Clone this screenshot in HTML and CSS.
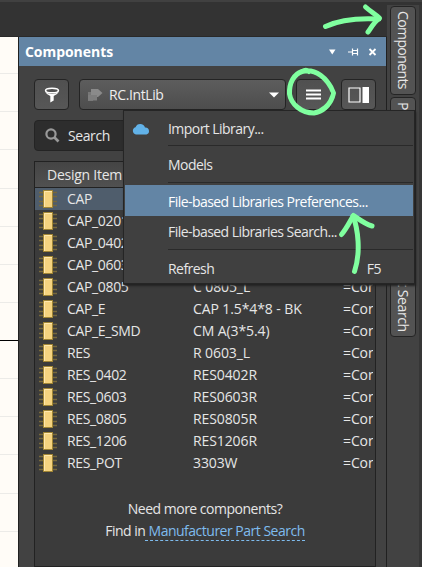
FILE: index.html
```
<!DOCTYPE html>
<html lang="en">
<head>
<meta charset="utf-8">
<title>Components</title>
<link rel="stylesheet" href="styles.css">
</head>
<body>
<svg class="defs" width="0" height="0" aria-hidden="true">
  <symbol id="chip" viewBox="0 0 18 18">
    <path d="M0 2.500h18M0 6.500h18M0 11.500h18M0 15.500h18" stroke="#77683b" stroke-width="1.600"/>
    <rect x="4.500" y=".5" width="9" height="17" fill="#f5d37f" stroke="#a08535"/>
    <path d="M5.500 17V1.500H13" fill="none" stroke="#ffe7ad"/>
  </symbol>
</svg>
<div class="app">
  <div class="topbar"></div>
  <div class="canvas">
    <svg width="18" height="530" shape-rendering="crispEdges">
      <path d="M0 36.500h18M0 74.500h18M0 112.500h18M0 151.500h18M0 189.500h18M0 227.500h18M0 265.500h18M0 341.500h18M0 379.500h18M0 417.500h18M0 456.500h18M0 494.500h18" stroke="#ecebe8"/>
      <path d="M0 303.500h18" stroke="#000"/>
    </svg>
  </div>
  <main class="panel">
    <header class="titlebar">
      <h1>Components</h1>
      <svg width="50" height="12" viewBox="0 0 50 12">
        <path d="M1 3.500h6.500L4.250 8.500z" fill="#fff"/>
        <path d="M20 6h4M24.500 2.500v7M24.500 4.500h5v3h-5M29.500 2.500v7" fill="none" stroke="#fff" stroke-width="1.200"/>
        <path d="M41.500 3l6 6M47.500 3l-6 6" stroke="#fff" stroke-width="1.800"/>
      </svg>
    </header>
    <div class="toolbar">
      <button class="btn"><svg width="16" height="16" viewBox="0 0 16 16"><ellipse cx="8" cy="3.500" rx="6.400" ry="2.300" fill="none" stroke="#fff" stroke-width="1.600"/><path d="M1 4.500Q2 7 6.300 9v6.500l3.400-2V9Q14 7 15 4.500Q12 7 8 7T1 4.500" fill="#fff"/></svg></button>
      <button class="btn combo">
        <svg width="16" height="14" viewBox="0 0 16 14"><path d="M1 4h5v9H1z" fill="#777"/><path d="M4 1h7l4.500 4-4.500 4H4z" fill="#8a8a8a"/><path d="M1 7h9v5.500H1z" fill="#7d7d7d"/></svg>
        <span>RC.IntLib</span>
        <svg class="caret" width="10" height="6"><path d="M0 .5h10L5 5.500z" fill="#fff"/></svg>
      </button>
      <button class="btn menu-btn"><svg width="15" height="11"><path d="M0 1.500h15M0 5.500h15M0 9.500h15" stroke="#fff" stroke-width="2"/></svg></button>
      <button class="btn"><svg width="21" height="16"><path d="M1 1h11v14H1z" fill="none" stroke="#fff" stroke-width="1.200"/><path d="M14.500 0h6.500v16h-6.500z" fill="#fff"/></svg></button>
    </div>
    <div class="search">
      <svg width="15" height="15" viewBox="0 0 15 15"><circle cx="6" cy="6" r="4.600" fill="none" stroke="#999" stroke-width="2.200"/><path d="M9.500 9.500l4 4" stroke="#999" stroke-width="2.600"/></svg>
      <span>Search</span>
    </div>
    <section class="list">
      <div class="list-head">Design Item</div>
      <div class="row selected"><svg><use href="#chip"/></svg><span class="name">CAP</span><span></span><span>=Cor</span></div>
      <div class="row"><svg><use href="#chip"/></svg><span class="name">CAP_0201</span><span></span><span>=Cor</span></div>
      <div class="row"><svg><use href="#chip"/></svg><span class="name">CAP_0402</span><span></span><span>=Cor</span></div>
      <div class="row"><svg><use href="#chip"/></svg><span class="name">CAP_0603</span><span></span><span>=Cor</span></div>
      <div class="row"><svg><use href="#chip"/></svg><span class="name">CAP_0805</span><span>C 0805_L</span><span>=Cor</span></div>
      <div class="row"><svg><use href="#chip"/></svg><span class="name">CAP_E</span><span>CAP 1.5*4*8 - BK</span><span>=Cor</span></div>
      <div class="row"><svg><use href="#chip"/></svg><span class="name">CAP_E_SMD</span><span>CM A(3*5.4)</span><span>=Cor</span></div>
      <div class="row"><svg><use href="#chip"/></svg><span class="name">RES</span><span>R 0603_L</span><span>=Cor</span></div>
      <div class="row"><svg><use href="#chip"/></svg><span class="name">RES_0402</span><span>RES0402R</span><span>=Cor</span></div>
      <div class="row"><svg><use href="#chip"/></svg><span class="name">RES_0603</span><span>RES0603R</span><span>=Cor</span></div>
      <div class="row"><svg><use href="#chip"/></svg><span class="name">RES_0805</span><span>RES0805R</span><span>=Cor</span></div>
      <div class="row"><svg><use href="#chip"/></svg><span class="name">RES_1206</span><span>RES1206R</span><span>=Cor</span></div>
      <div class="row"><svg><use href="#chip"/></svg><span class="name">RES_POT</span><span>3303W</span><span>=Cor</span></div>
      <div class="more">
        <p class="need">Need more components?</p>
        <p class="find">Find in<a>&nbsp;Manufacturer Part Search</a></p>
      </div>
    </section>
  </main>
  <nav class="rail">
    <div class="tab first"><span>Components</span></div>
    <div class="tab second"><span>P</span><span>t Search</span></div>
  </nav>
  <div class="edge"></div>
</div>

<div class="menu">
  <div class="item import"><svg width="18" height="12" viewBox="0 0 18 12"><path d="M4 11.500a3.700 3.700 0 0 1-.5-7.200A5 5 0 0 1 13 4.500a3.600 3.600 0 0 1 1.500 7z" fill="#62b2e8"/></svg><span>Import Library...</span></div>
  <hr>
  <div class="item models"><span>Models</span></div>
  <hr>
  <div class="item active"><span>File-based Libraries Preferences...</span></div>
  <div class="item lib-search"><span>File-based Libraries Search...</span></div>
  <hr>
  <div class="item refresh"><span>Refresh</span><kbd>F5</kbd></div>
</div>

<svg class="marks" width="422" height="567" fill="none" stroke="#80ff9f" stroke-width="5" stroke-linecap="round" stroke-linejoin="round">
  <path d="M325.500 26.500C341 19 360 18 379 19"/>
  <path d="M365.500 7C370 11 375 14 379.500 18C374 22 371 28 368 32"/>
  <path d="M302 71.500C315 68 328 78 333.500 93C331 106 321 112 314 113C301 113 291 104 289.500 94C289 83 294 74 302 71.500Q306 69 309 71.500"/>
  <path d="M354.500 271.500C361 252 358 229 353 216"/>
  <path d="M341.500 234.500C347 228 350 221 353.500 215.500C360 220 365 224 372 226"/>
</svg>
</body>
</html>
```
FILE: styles.css
```
* { box-sizing: border-box; }
body {
  margin: 0; width: 422px; height: 567px; overflow: hidden; position: relative;
  background: #333; color: #e6e6e6;
  font: 14px/22px "Open Sans", "Noto Sans", sans-serif; letter-spacing: -0.4px;
}
h1, p { margin: 0; }
svg { display: block; flex: none; }
.defs { position: absolute; }
.app {
  display: grid; height: 567px;
  grid-template: 5px 32px 530px / 18px 369px 32px 3px;
}
.topbar { grid-area: 1 / 1 / 3 / 5; background: linear-gradient(#414141 2px, #333 2px); border-bottom: 1px solid #292929; }
.canvas { grid-area: 3 / 1; background: #fffcf7; }
.panel {
  grid-area: 3 / 2; background: #424242; border-left: 1px solid #202020; border-right: 1px solid #202020;
  display: flex; flex-direction: column;
}
.titlebar {
  height: 29px; background: #6385a5; display: flex; align-items: center;
  justify-content: space-between; padding: 0 8px 0 6px; color: #fff;
}
h1 { font-size: 14px; font-weight: 700; letter-spacing: -0.05px; }
.toolbar { display: flex; padding: 13px 10px 0 15px; height: 54px; gap: 10px; }
.btn {
  width: 35px; height: 31px; padding: 0; border: 1px solid #242424; border-radius: 4px;
  background: linear-gradient(#505050, #575757); display: flex; align-items: center; justify-content: center;
  font: inherit; letter-spacing: inherit; color: #eee;
}
.combo { width: 207px; justify-content: flex-start; padding: 0 6px 0 7px; background: linear-gradient(#5d5d5d, #4d4d4d); }
.combo span { margin-left: 6px; }
.caret { margin-left: auto; }
.search {
  margin: 0 10px 0 15px; height: 31px; border: 1px solid #242424; border-radius: 4px;
  background: #2d2d2d; display: flex; align-items: center; gap: 8px; padding-left: 10px;
}
.list {
  flex: 1; margin: 10px 10px 0 15px; background: #3b3b3b; border: 1px solid #222;
}
.list-head {
  height: 26px; background: linear-gradient(#444, #515151); border-bottom: 1px solid #222;
  padding-left: 12px; line-height: 25px; letter-spacing: -0.25px;
}
.row {
  display: grid; grid-template-columns: 18px 136px 150px 30px; height: 22px; margin-right: 1px;
  padding-left: 4px; align-items: center; overflow: hidden; white-space: nowrap;
}
.row svg { width: 18px; height: 18px; }
.row span { overflow: hidden; letter-spacing: -0.1px; }
.row .name { padding-left: 10px; letter-spacing: -0.35px; }
.row.selected { background: #4f5d6c; }
.more { text-align: center; padding-top: 24px; letter-spacing: -0.5px; }
.find a { color: #7fbcee; border-bottom: 1px dashed #7fbcee; display: inline-block; line-height: 18px; }
.rail {
  grid-area: 2 / 3 / 4 / 4; background: #424242; padding: 1px 3px; display: flex; flex-direction: column; gap: 2px;
}
.tab {
  width: 26px; border: 1px solid #242424; border-radius: 4px; background: #535353;
  writing-mode: vertical-rl; line-height: 24px; display: flex; justify-content: space-between;
}
.first { height: 89px; padding-top: 4px; letter-spacing: -0.6px; }
.second { height: 240px; padding: 4px 0; }
.edge { grid-area: 2 / 4 / 4 / 5; background: #363636; }
.menu {
  position: absolute; left: 123px; top: 110px; width: 292px; height: 174px;
  background: #404040; border: 1px solid #252525; box-shadow: 1px 2px 2px #222; padding: 0 1px;
  letter-spacing: -0.55px;
}
.menu hr { height: 1px; border: 0; margin: 0 0 0 43px; background: #2a2a2a; }
.item { display: flex; align-items: center; padding-left: 43px; white-space: nowrap; }
.import { height: 34px; padding: 2px 0 0 7px; }
.import span { margin-left: 18px; }
.models { height: 36px; padding-top: 2px; }
.active { height: 31px; margin-top: 2px; background: #6385a5; color: #fff; padding-top: 2px; }
.lib-search { height: 33px; padding-bottom: 2px; }
.refresh { height: 34px; padding-top: 4px; }
kbd { font: inherit; margin-left: auto; padding-right: 32px; }
.marks { position: absolute; left: 0; top: 0; }
```
